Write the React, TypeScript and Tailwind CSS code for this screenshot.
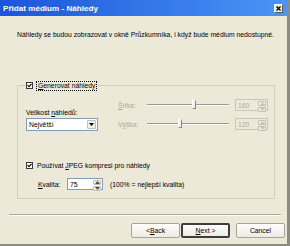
import React from 'react';

const dis = 'text-[#aca899]';

function Check() {
  return (
    <span className="w-[7px] h-[7px] bg-white border border-[#3a3a3a] flex items-center justify-center shrink-0">
      <svg width="5" height="5" viewBox="0 0 5 5">
        <path d="M0.5 2.2 L2 3.7 L4.5 1" stroke="#111" strokeWidth="1.2" fill="none" />
      </svg>
    </span>
  );
}

function Arrow({ up, color }: { up?: boolean; color: string }) {
  return (
    <svg width="5" height="3" viewBox="0 0 5 3">
      <path d={up ? 'M0 3 L2.5 0 L5 3 Z' : 'M0 0 L5 0 L2.5 3 Z'} fill={color} />
    </svg>
  );
}

function Spinner({ disabled }: { disabled?: boolean }) {
  const c = disabled ? '#c9c7ba' : '#4d4d4d';
  return (
    <div className="w-[9px] h-full flex flex-col gap-[1px] py-[1px] pr-[1px]">
      <div className="flex-1 flex items-center justify-center bg-[#f1efe6] border border-[#c2c0b2] rounded-[1px]">
        <Arrow up color={c} />
      </div>
      <div className="flex-1 flex items-center justify-center bg-[#f1efe6] border border-[#c2c0b2] rounded-[1px]">
        <Arrow color={c} />
      </div>
    </div>
  );
}

function Slider({ pos }: { pos: number }) {
  return (
    <div className="relative w-[82px] h-[12px] flex items-center">
      <div className="w-full h-[2px] border-t border-t-[#9d9a8a] border-b border-b-white" />
      <div
        className="absolute top-[1px] w-[4px] h-[9px] bg-[#f3f2ec] border border-white border-r-[#8a8878] border-b-[#8a8878]"
        style={{ left: pos }}
      />
    </div>
  );
}

function SizeRow({ label, value, pos }: { label: React.ReactNode; value: string; pos: number }) {
  return (
    <div className="flex items-center h-[12px]">
      <span className={`w-[29px] ${dis}`}>{label}</span>
      <Slider pos={pos} />
      <div className="ml-[6px] w-[33px] h-[12px] border border-[#c9c7ba] flex items-center">
        <span className={`flex-1 pl-[2px] ${dis}`}>{value}</span>
        <Spinner disabled />
      </div>
    </div>
  );
}

function Btn({ children, def }: { children: React.ReactNode; def?: boolean }) {
  return (
    <div
      className={`w-[49px] h-[15px] flex items-center justify-center rounded-[2px] bg-gradient-to-b from-[#fdfdfb] to-[#ecebe4] ${
        def ? 'border-2 border-[#3d3d3d]' : 'border border-[#a6a598]'
      }`}
    >
      {children}
    </div>
  );
}

export default function App() {
  return (
    <div className="w-[290px] h-[246px] bg-[#ece9d8] flex flex-col border-r-[3px] border-b-2 border-[#8d8b80] font-['Liberation_Sans',Arial,sans-serif] text-[6.8px] leading-[9px] text-black overflow-hidden">
      {/* title bar */}
      <div className="h-[16px] shrink-0 flex items-center justify-between pl-[3px] pr-[4px] bg-gradient-to-r from-[#1b55d8] to-[#4b94f6]">
        <span className="text-white font-bold text-[8.1px]">Přidat médium - Náhledy</span>
        <div className="w-[9px] h-[9px] bg-[#f0efe8] border border-white border-r-[#5a5a5a] border-b-[#5a5a5a] flex items-center justify-center">
          <svg width="5" height="5" viewBox="0 0 5 5">
            <path d="M0.5 0.5 L4.5 4.5 M4.5 0.5 L0.5 4.5" stroke="#000" strokeWidth="1.4" />
          </svg>
        </div>
      </div>

      <p className="mt-[14px] pl-[17px] whitespace-nowrap">
        Náhledy se budou zobrazovat v okně Průzkumníka, i když bude médium nedostupné.
      </p>

      {/* group box */}
      <div className="relative mt-[46px] ml-[17px] w-[258px] h-[114px] shrink-0 border border-[#d0d0bf] pl-[8px]">
        <div className="absolute -top-[6px] left-[7px] h-[11px] flex items-center bg-[#ece9d8] px-[1px]">
          <Check />
          <span className="ml-[3px] px-[1px] border border-dotted border-black leading-[8px]">
            <u>G</u>enerovat náhledy
          </span>
        </div>

        <div className="flex items-start pt-[13px]">
          <div className="w-[72px] mt-[9px] flex flex-col">
            <span className="h-[9px]">
              Velikost <u>n</u>áhledů:
            </span>
            <div className="mt-[1px] h-[13px] bg-white border border-[#7f9db9] flex items-center">
              <span className="flex-1 pl-[2px]">Největší</span>
              <div className="w-[10px] h-full py-[1px] pr-[1px]">
                <div className="w-full h-full bg-[#f1efe6] border border-[#c2c0b2] rounded-[1px] flex items-center justify-center">
                  <Arrow color="#000" />
                </div>
              </div>
            </div>
          </div>
          <div className="ml-[20px] flex flex-col gap-[7px]">
            <SizeRow label={<><u>Š</u>ířka:</>} value="160" pos={45} />
            <SizeRow label={<>V<u>ý</u>ška:</>} value="120" pos={31} />
          </div>
        </div>

        <div className="mt-[29px] h-[10px] flex items-center">
          <Check />
          <span className="ml-[4px]">
            Používat <u>J</u>PEG kompresi pro náhledy
          </span>
        </div>

        <div className="mt-[8px] h-[12px] flex items-center pl-[12px]">
          <span className="w-[29px]">
            <u>K</u>valita:
          </span>
          <div className="w-[36px] h-[12px] bg-white border border-[#7f9db9] flex items-center">
            <span className="flex-1 pl-[2px]">75</span>
            <Spinner />
          </div>
          <span className="ml-[7px]">(100% = nejlepší kvalita)</span>
        </div>
      </div>

      {/* separator */}
      <div className="mt-[15px] ml-[9px] w-[272px] h-[2px] border-t border-t-[#aca899] border-b border-b-white" />

      {/* buttons */}
      <div className="mt-[7px] flex pl-[131px] gap-[1px]">
        <Btn>
          &lt; <u>B</u>ack
        </Btn>
        <Btn def>
          <u>N</u>ext &gt;
        </Btn>
        <div className="ml-[5px]">
          <Btn>Cancel</Btn>
        </div>
      </div>
    </div>
  );
}
